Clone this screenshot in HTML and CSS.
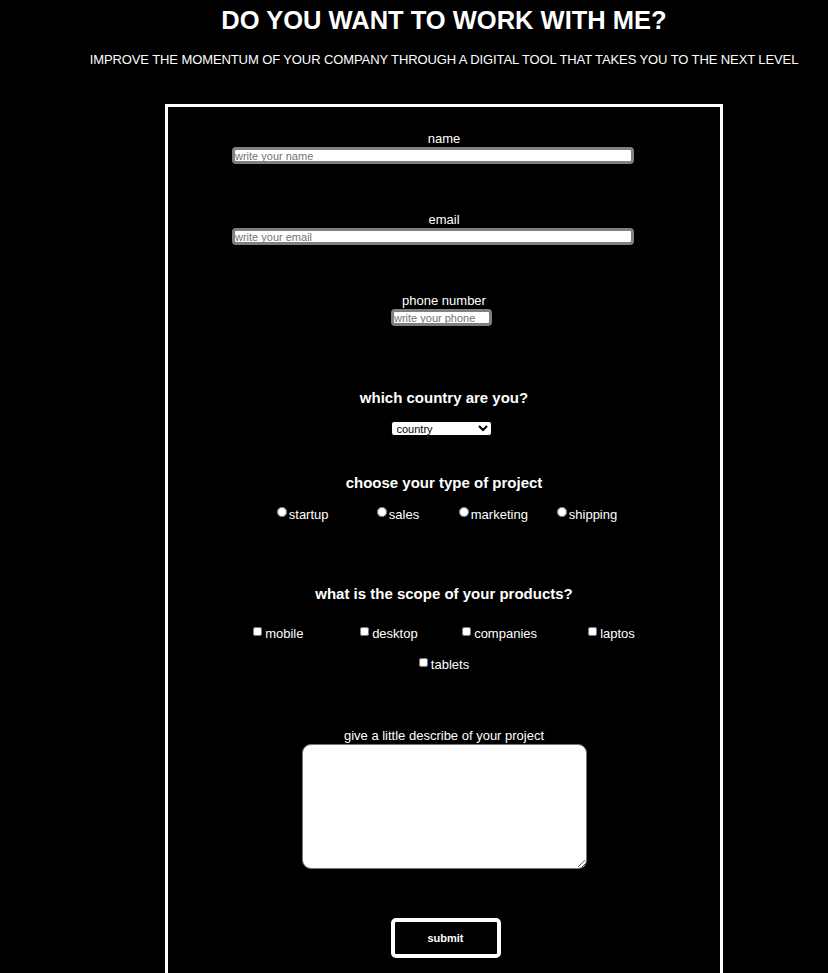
FILE: index.html
```html
<!DOCTYPE html>
<html lang="en">
<head>
<meta charset="utf-8">
<title>Work with me</title>
<link rel="stylesheet" href="styles.css">
</head>
<body>
<main class="page">
  <header class="intro">
    <h1 class="title">DO YOU WANT TO WORK WITH ME?</h1>
    <p class="subtitle">IMPROVE THE MOMENTUM OF YOUR COMPANY THROUGH A DIGITAL TOOL THAT TAKES YOU TO THE NEXT LEVEL</p>
  </header>
  <form class="form">
    <div class="field">
      <label class="label" for="name">name</label>
      <input class="text-input" id="name" type="text" placeholder="write your name">
    </div>
    <div class="field">
      <label class="label" for="email">email</label>
      <input class="text-input" id="email" type="email" placeholder="write your email">
    </div>
    <div class="field">
      <label class="label" for="phone">phone number</label>
      <input class="text-input text-input--short" id="phone" type="tel" placeholder="write your phone">
    </div>
    <div class="group group--country">
      <h3 class="group-title">which country are you?</h3>
      <select class="select">
        <option>country</option>
      </select>
    </div>
    <div class="group group--type">
      <h3 class="group-title">choose your type of project</h3>
      <div class="options options--radio">
        <label class="option"><input type="radio" name="type" class="radio">startup</label>
        <label class="option"><input type="radio" name="type" class="radio">sales</label>
        <label class="option"><input type="radio" name="type" class="radio">marketing</label>
        <label class="option"><input type="radio" name="type" class="radio">shipping</label>
      </div>
    </div>
    <div class="group group--scope">
      <h3 class="group-title">what is the scope of your products?</h3>
      <div class="options options--check">
        <label class="option"><input type="checkbox" class="check">mobile</label>
        <label class="option"><input type="checkbox" class="check">desktop</label>
        <label class="option"><input type="checkbox" class="check">companies</label>
        <label class="option"><input type="checkbox" class="check">laptos</label>
        <label class="option"><input type="checkbox" class="check">tablets</label>
      </div>
    </div>
    <div class="field field--area">
      <label class="label" for="desc">give a little describe of your project</label>
      <textarea class="textarea" id="desc"></textarea>
    </div>
    <button class="submit" type="button">submit</button>
  </form>
</main>
</body>
</html>
```

FILE: styles.css
```css
html, body {
  margin: 0;
  padding: 0;
  background: #000;
  color: #fff;
  font-family: "Liberation Sans", Arial, sans-serif;
}

.page {
  padding-left: 60px;
  display: flex;
  flex-direction: column;
  align-items: center;
}

.intro {
  text-align: center;
}

.title {
  margin: 5px 0 0;
  font-size: 25.5px;
  font-weight: bold;
  line-height: 30px;
}

.subtitle {
  margin: 17px 0 0;
  font-size: 13px;
  line-height: 16px;
  letter-spacing: -0.1px;
}

.form {
  margin-top: 36px;
  width: 552px;
  border: 3px solid #fff;
  border-bottom: none;
  padding: 24px 0 20px;
  display: flex;
  flex-direction: column;
  align-items: center;
  box-sizing: content-box;
  min-height: 900px;
}

.field {
  display: flex;
  flex-direction: column;
  align-items: center;
  margin-bottom: 48px;
}

.label {
  font-size: 13px;
  line-height: 16px;
}

.text-input {
  width: 402px;
  height: 17px;
  margin-right: 22px;
  box-sizing: border-box;
  border: 3px solid #808080;
  border-radius: 4px;
  background: #fff;
  padding: 0;
  font-family: "Liberation Sans", Arial, sans-serif;
  font-size: 11px;
  color: #000;
  outline: none;
}

.text-input::placeholder {
  color: #757575;
}

.text-input--short {
  width: 101px;
  margin-right: 5px;
}

.group {
  display: flex;
  flex-direction: column;
  align-items: center;
}

.group-title {
  margin: 0;
  font-size: 15px;
  line-height: 18px;
  font-weight: bold;
}

.group--country {
  margin-top: 15px;
}

.select {
  margin-top: 14px;
  margin-right: 6px;
  width: 101px;
  height: 15px;
  font-size: 11px;
  padding: 0 0 0 1px;
  border: 1px solid #000;
  border-radius: 3px;
  background: #fff;
  color: #000;
  font-family: "Liberation Sans", Arial, sans-serif;
}

.group--type {
  margin-top: 38px;
}

.options {
  display: flex;
  flex-wrap: wrap;
  justify-content: center;
  width: 402px;
}

.options--radio {
  margin-top: 14px;
  padding-left: 6px;
}

.options--radio .option:nth-child(1) { width: 100px; }
.options--radio .option:nth-child(2) { width: 82px; }
.options--radio .option:nth-child(3) { width: 98px; }

.options--check {
  margin-top: 22px;
  row-gap: 14px;
}

.options--check .option:nth-child(1) { width: 107px; }
.options--check .option:nth-child(2) { width: 102px; }
.options--check .option:nth-child(3) { width: 126px; }

.option {
  display: inline-flex;
  align-items: flex-start;
  font-size: 13px;
  line-height: 17px;
}

.radio {
  width: 10px;
  height: 10px;
  margin: 1px 2px 0 0;
}

.check {
  width: 9px;
  height: 9px;
  margin: 2px 3px 0 0;
}

.group--scope {
  margin-top: 62px;
}

.field--area {
  margin-top: 55px;
  margin-bottom: 0;
}

.textarea {
  width: 285px;
  height: 125px;
  box-sizing: border-box;
  border: 1px solid #767676;
  border-radius: 9px;
  background: #fff;
  resize: both;
}

.submit {
  margin-top: 49px;
  margin-left: 3px;
  width: 110px;
  height: 40px;
  border: 4px solid #fff;
  border-radius: 5px;
  background: #000;
  color: #fff;
  font-family: "Liberation Sans", Arial, sans-serif;
  font-size: 11px;
  font-weight: bold;
  cursor: pointer;
}
```
